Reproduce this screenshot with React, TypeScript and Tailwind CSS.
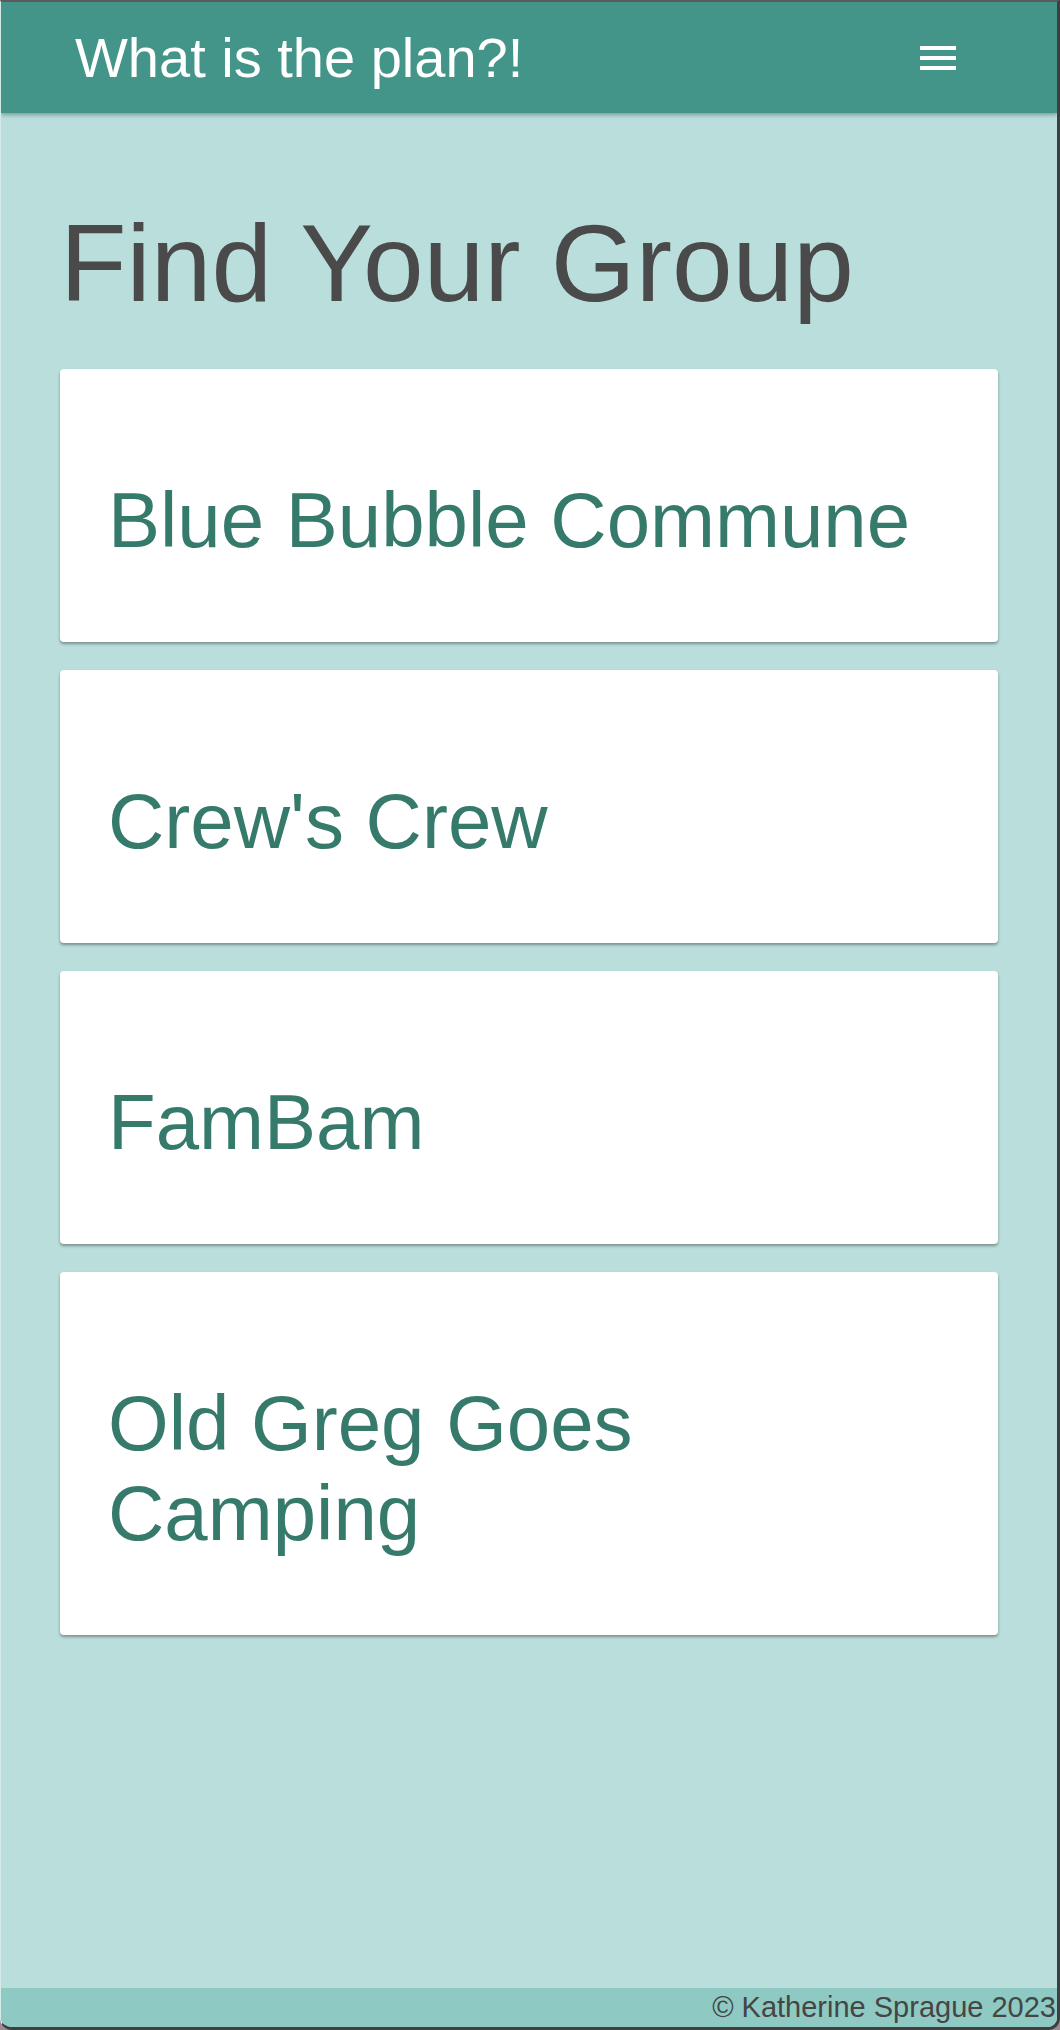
import React from "react";

const groups = [
  "Blue Bubble Commune",
  "Crew's Crew",
  "FamBam",
  "Old Greg Goes Camping",
];

function Menu() {
  return (
    <button className="flex flex-col gap-[6px]" aria-label="menu">
      <span className="block w-[36px] h-[4px] bg-white" />
      <span className="block w-[36px] h-[4px] bg-white" />
      <span className="block w-[36px] h-[4px] bg-white" />
    </button>
  );
}

export default function App() {
  return (
    <div
      className="w-[1060px] h-[2030px] bg-[#9c8a94]"
      style={{ fontFamily: '"Liberation Sans", Arial, sans-serif' }}
    >
      <div className="flex flex-col h-full overflow-hidden rounded-b-[12px] bg-[#badedb] border-t-2 border-t-[#5b5b5b] border-r-[3px] border-r-[#3f3f3f] border-b-[3px] border-b-[#3f3f3f] border-l border-l-[#d4ebe8]">
        <header className="relative z-10 h-[111px] shrink-0 flex items-center justify-between pl-[74px] pr-[101px] bg-[#43958a] shadow-[0_2px_4px_rgba(0,0,0,0.3)]">
          <h1 className="text-[56px] leading-none text-white">What is the plan?!</h1>
          <Menu />
        </header>

        <main className="flex-1 px-[59px]">
          <h2 className="mt-[88px] mb-[43px] text-[109px] leading-[1.15] text-[#4a4a4a]">
            Find Your Group
          </h2>
          <div className="flex flex-col gap-[28px]">
            {groups.map((name) => (
              <div
                key={name}
                className="bg-white rounded-[4px] shadow-[0_2px_3px_rgba(0,0,0,0.35)] pt-[106px] pb-[77px] pl-[48px] pr-[46px]"
              >
                <h3 className="text-[78px] leading-[90px] text-[#357a6b]">{name}</h3>
              </div>
            ))}
          </div>
        </main>

        <footer className="h-[39px] shrink-0 flex items-center justify-end pr-[1px] bg-[#8ecac3]">
          <p className="text-[29px] leading-none text-[#454545]">© Katherine Sprague 2023</p>
        </footer>
      </div>
    </div>
  );
}
